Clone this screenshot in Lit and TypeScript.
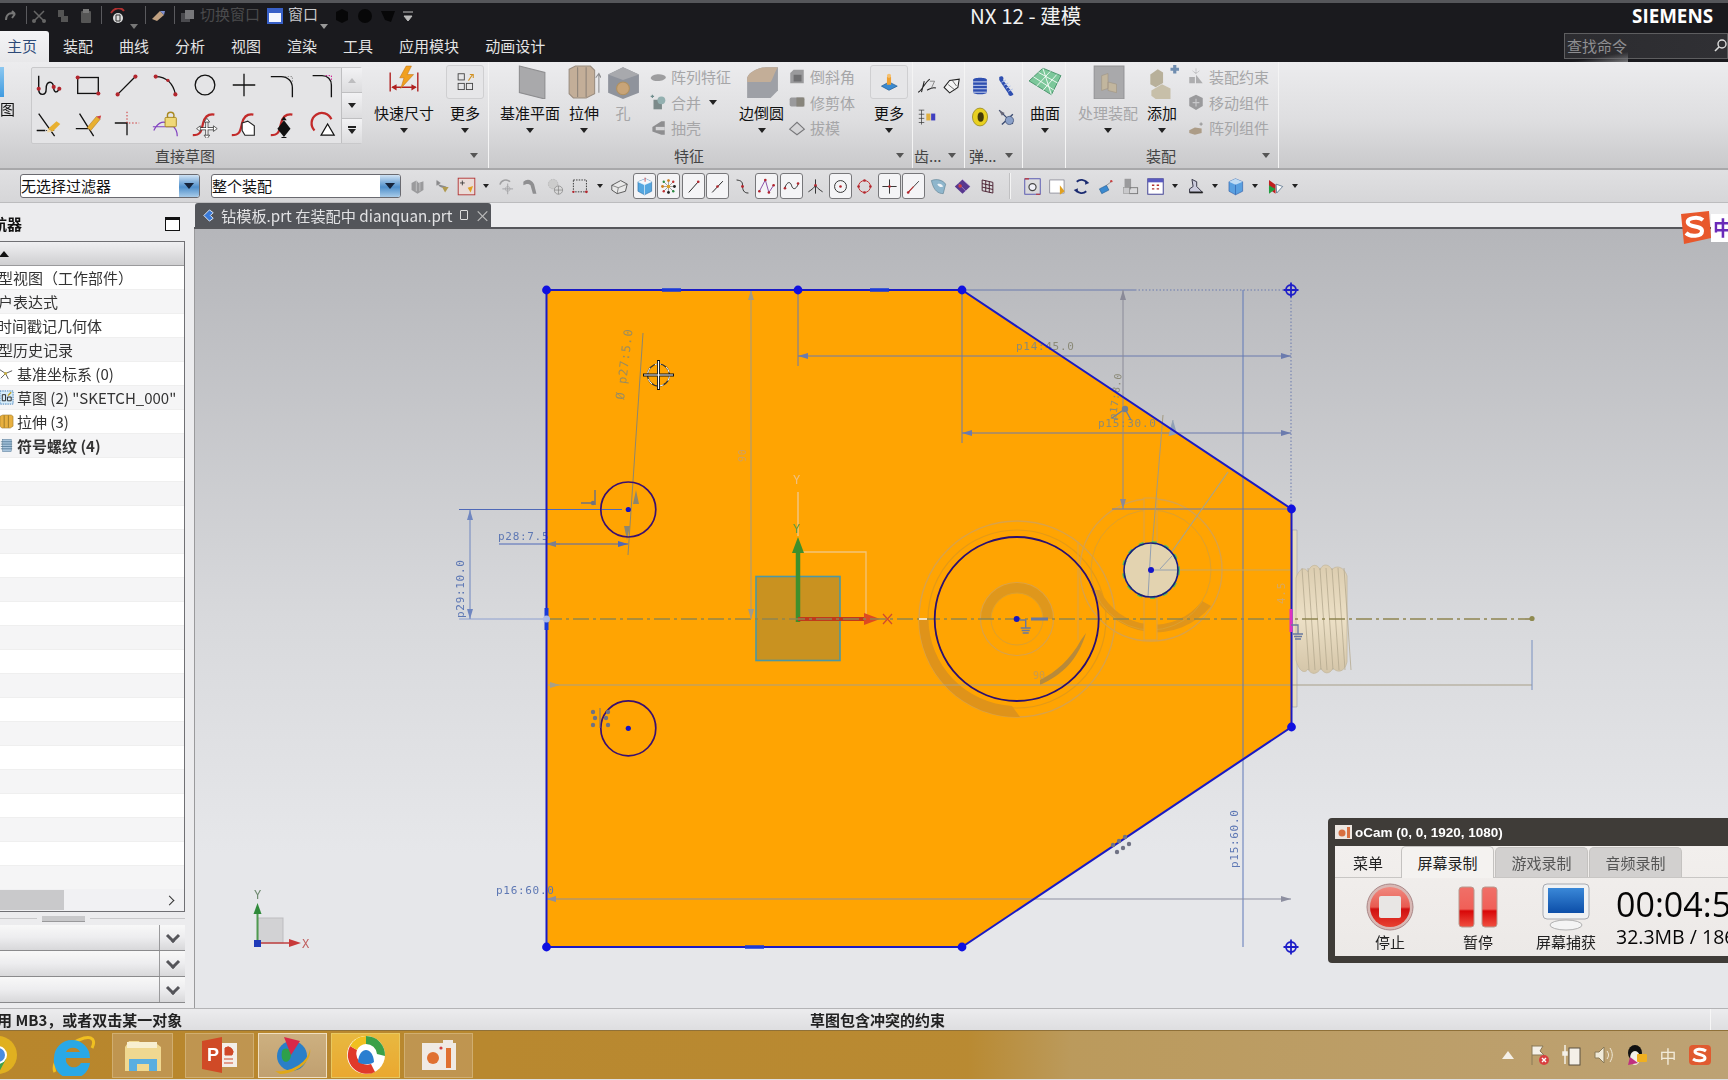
import { LitElement, html, svg, css, nothing } from 'lit';
import { customElement } from 'lit/decorators.js';

const RED = '#b3262e';
const dot = (x: number, y: number, r = 2.2, c = RED) => svg`<circle cx=${x} cy=${y} r=${r} fill=${c}></circle>`;
const sCurve = svg`<path d="M3 29 C12 29 12 24 14 16 C16 8 20 6 26 7" fill="none" stroke="#c22a2a" stroke-width="2.4"></path>`;

// all icons drawn on a 32 box
const ICONS: Record<string, unknown> = {
  // sketch gallery
  studio: svg`<path d="M5 6 V20 C5 28 13 28 13 20 C13 11 21 11 21 19 C21 25 26 25 27 18" fill="none" stroke="#111" stroke-width="1.5"></path>${dot(5, 20)}${dot(21, 18)}${dot(27, 20)}`,
  rect: svg`<rect x="5" y="8" width="22" height="17" fill="none" stroke="#111" stroke-width="1.4"></rect>${dot(5, 8)}${dot(27, 25)}`,
  line: svg`<path d="M6 26 L25 7" stroke="#111" stroke-width="1.4"></path>${dot(6, 26)}${dot(25, 7)}`,
  arc: svg`<path d="M5 7 C17 7 24 15 26 26" fill="none" stroke="#111" stroke-width="1.4"></path>${dot(5, 7)}${dot(26, 26)}${dot(18, 11, 1.8)}`,
  circle: svg`<circle cx="16" cy="16" r="10.5" fill="none" stroke="#111" stroke-width="1.4"></circle>`,
  plus: svg`<path d="M16 4 V28 M4 16 H28" stroke="#111" stroke-width="1.4"></path>`,
  fillet: svg`<path d="M3 7 H14 C21 7 26 12 26 19 V29" fill="none" stroke="#111" stroke-width="1.4"></path><path d="M18 7 H26 V14" fill="none" stroke="#888" stroke-dasharray="1.5 1.5"></path>`,
  chamfer: svg`<path d="M6 6 H16 C22 6 26 10 26 16 V29" fill="none" stroke="#111" stroke-width="1.4"></path><path d="M20 6 H26 V12" fill="none" stroke="#c08" stroke-dasharray="1.5 1.5"></path>`,
  trim: svg`<path d="M5 6 L22 30 M3 24 H12" stroke="#111" stroke-width="1.4"></path><path d="M3 24 H22" stroke="#111" stroke-dasharray="1 1.5"></path><path d="M15 22 L24 14 L28 17 L20 25 Z" fill="#e8b030"></path><path d="M15 22 L20 25 L14 26Z" fill="#f4d8a0"></path>`,
  extend: svg`<path d="M7 6 L22 30 M3 22 H16" stroke="#111" stroke-width="1.4"></path><path d="M15 21 L25 9 L29 12 L19 24 Z" fill="#e8b030" stroke="#a06818" stroke-width=".5"></path><path d="M25 9 L29 12 L30 8Z" fill="#d04040"></path>`,
  corner: svg`<path d="M3 16 H16 V29" fill="none" stroke="#111" stroke-width="1.4"></path><path d="M16 4 V16 H29" fill="none" stroke="#c22" stroke-width="1" stroke-dasharray="1.5 2"></path>`,
  lockcurve: svg`<path d="M3 24 C8 14 14 13 22 18 C26 21 28 25 28 30 M2 20 H24" fill="none" stroke="#8040c0" stroke-width="1.3"></path><circle cx="21" cy="8" r="3.5" fill="none" stroke="#a88820" stroke-width="1.5"></circle><rect x="15" y="10" width="12" height="10" rx="1" fill="#f0d878" stroke="#a88820"></rect>`,
  smove: svg`${sCurve}<path d="M18 14 V30 M10 22 H26" stroke="#333" stroke-width="3.2"></path><path d="M18 14 V30 M10 22 H26" stroke="#fff" stroke-width="1.6"></path><path d="M18 11 L15 15 H21Z M18 33 L15 29 H21Z M7 22 L11 19 V25Z M29 22 L25 19 V25Z" fill="#fff" stroke="#333" stroke-width=".8"></path>`,
  shand: svg`${sCurve}<path d="M14 16 L20 14 L27 19 V29 H17 L14 24Z" fill="#fff" stroke="#222" stroke-width="1.2"></path>`,
  sdia: svg`${sCurve}<path d="M17 13 L24 22 L17 31 L10 22Z" fill="#111"></path><path d="M17 9 L14 13 H20Z M17 35 L14 31 H20Z" fill="#111"></path>`,
  arctri: svg`<path d="M8 24 A11 11 0 1 1 26 12" fill="none" stroke="#c22a2a" stroke-width="2.4"></path><path d="M22 17 L29 29 H15Z" fill="#fff" stroke="#111" stroke-width="1.3"></path>`,
  // ribbon big
  quickdim: svg`<path d="M3 7 V25 M29 7 V25 M5 21 H27" stroke="#b02020" stroke-width="1.3" fill="none"></path><path d="M4 21 L9 18 V24Z M28 21 L23 18 V24Z" fill="#b02020"></path><path d="M18 1 L23 1 L19 9 L25 9 L13 22 L16 12 L12 12Z" fill="#f0a020" stroke="#c07010" stroke-width=".5"></path>`,
  moreS: svg`<rect x="6" y="4" width="9" height="9" fill="none" stroke="#444" stroke-width="1.3"></rect><rect x="6" y="18" width="9" height="9" fill="none" stroke="#444" stroke-width="1.3"></rect><rect x="18" y="18" width="9" height="9" fill="none" stroke="#444" stroke-width="1.3"></rect><path d="M21 14 L27 5 M23 5 H28 V10" stroke="#d09020" fill="none" stroke-width="1.5"></path>`,
  plane: svg`<path d="M6 1 L30 7 V32 L6 26Z" fill="#a9a9ab" stroke="#8d8d8f"></path>`,
  extrude: svg`<path d="M2 4 L8 1 L22 1 L26 5 V27 L18 31 H6 L2 27Z" fill="#c3ae98" stroke="#9a8d80"></path><path d="M10 2 V30 M18 2 V30" stroke="#8d8378"></path><path d="M30 26 V9 M27 12 L30 8 L32 12" stroke="#8d8d8f" fill="none"></path>`,
  hole: svg`<path d="M2 9 L16 2 L31 9 V26 L16 32 L2 26Z" fill="#8f939c"></path><path d="M2 9 L16 2 L31 9 L16 14Z" fill="#a8a9ad"></path><circle cx="16" cy="22" r="6" fill="#c8a478" stroke="#b09060"></circle>`,
  blend: svg`<path d="M2 12 C4 6 14 2 20 2 H31 V24 L24 31 H2Z" fill="#9ea0a6"></path><path d="M2 12 C4 6 14 2 20 2 H31 C28 6 26 14 24 16 H2Z" fill="#c3ae98"></path>`,
  moreF: svg`<path d="M5 22 L16 16 L28 22 L16 28Z" fill="#3b8ad0" stroke="#205a90"></path><path d="M13 8 H19 V20 H13Z" fill="#f0a030"></path><circle cx="16" cy="7" r="3" fill="#f4c070"></circle>`,
  surface: svg`<path d="M1 15 L14 3 L31 10 L22 28 Z" fill="#7cc79a" stroke="#3d8d62" stroke-width=".8"></path><path d="M5 11 L25 24 M10 7 L28 17 M14 3 L22 28 M8 20 L21 6 M14 24 L27 9" stroke="#fff" stroke-width=".8"></path>`,
  process: svg`<rect x="3" y="1" width="28" height="31" fill="#a9a9ab" stroke="#949496"></rect><path d="M10 10 L16 8 V22 L10 24Z M16 16 L24 18 V26 L16 24Z" fill="#c2b69e" stroke="#a09684" stroke-width=".6"></path>`,
  add: svg`<path d="M5 9 L12 4 L17 7 V17 L10 21 L5 18Z" fill="#b8b09a"></path><path d="M6 24 L16 18 L24 22 V32 H10 L6 29Z" fill="#c7bfa9"></path><path d="M24 4 H32 M28 0 V8" stroke="#6f8db0" stroke-width="3"></path>`,
  // small grey ribbon items
  pattern: svg`<path d="M3 18 C4 10 26 8 30 16 C30 24 6 26 3 18Z" fill="#9d9d9f"></path>`,
  merge: svg`<path d="M3 6 H9 M6 3 V9" stroke="#6f8d8d" stroke-width="2"></path><rect x="8" y="12" width="15" height="17" fill="#7c8a8a"></rect><circle cx="22" cy="13" r="7" fill="#93b0b0"></circle>`,
  shell: svg`<path d="M6 14 L22 4 H28 V28 H22 L6 22Z" fill="#8e8e90"></path><path d="M12 14 H28 V20 H12Z" fill="#d5d5d7"></path>`,
  chamf: svg`<path d="M4 9 L10 3 H28 V27 H4Z" fill="#9a9a9c"></path><path d="M10 12 H24 V24 H10Z" fill="#6f6f71"></path>`,
  trimb: svg`<rect x="3" y="8" width="26" height="16" rx="3" fill="#9a9a9c"></rect><path d="M15 8 H29 V24 H15Z" fill="#88857c"></path>`,
  draft: svg`<path d="M3 18 L16 6 L29 18 L16 28Z" fill="#d4d4d6" stroke="#77777a" stroke-width="2"></path>`,
  constraint: svg`<path d="M4 27 H14 V16 H4Z M16 27 H28 L16 12Z" fill="#adadaf"></path><path d="M16 1 V10 M10 5 L16 10 L22 5" stroke="#8d8d8f" fill="none" stroke-dasharray="2 1"></path>`,
  moveC: svg`<path d="M16 3 L28 9 V23 L16 30 L4 23 V9Z" fill="#9a9a9c"></path><path d="M16 10 V24 M10 17 H22" stroke="#c8c8ca" stroke-width="2"></path>`,
  patternC: svg`<path d="M4 20 L14 15 L26 17 V25 L14 28 L4 25Z" fill="#ac9c87"></path><path d="M25 6 V12 M22 9 H28" stroke="#888" stroke-width="1.5"></path>`,
  // gear & spring
  gear1: svg`<path d="M3 25 C8 24 12 12 20 6 M12 9 L8 25 M16 22 C20 20 24 17 29 19" fill="none" stroke="#222" stroke-width="1.5"></path><path d="M20 9 L27 9 L22 20" fill="none" stroke="#777" stroke-width="1.2"></path>`,
  gear2: svg`<path d="M6 18 L14 8 L28 6 L26 18 L14 26Z" fill="#f4f4f4" stroke="#222" stroke-width="1.5"></path><path d="M12 14 L22 22 M18 8 L24 16" stroke="#333"></path>`,
  gear3: svg`<path d="M8 6 V27 M4 6 H12 M4 12 H12 M4 18 H12 M4 24 H12" stroke="#333" fill="none"></path><rect x="15" y="11" width="6" height="10" fill="#e0b040"></rect><rect x="22" y="11" width="6" height="10" fill="#4040c0"></rect>`,
  spr1: svg`<path d="M6 7 C6 3 26 3 26 7 V25 C26 29 6 29 6 25Z" fill="#2f4fb0"></path><path d="M6 10 H26 M6 15 H26 M6 20 H26 M6 25 H26" stroke="#d0d8f0" stroke-width="1.4"></path>`,
  spr2: svg`<path d="M7 4 C11 1 14 5 12 8 L26 27 C23 31 19 29 19 26 L7 8Z" fill="#2f4fb0"></path><path d="M10 11 L16 8 M13 15 L19 12 M16 19 L22 16 M19 23 L25 20" stroke="#b0c0e8" stroke-width="1.3"></path>`,
  spr3: svg`<ellipse cx="16" cy="16" rx="11" ry="13" fill="#e8d020" stroke="#8a7a10"></ellipse><ellipse cx="17" cy="16" rx="4.5" ry="7" fill="#443a08"></ellipse>`,
  spr4: svg`<path d="M6 6 L26 26 M26 12 L10 27" stroke="#3a4a70" stroke-width="2"></path><circle cx="21" cy="21" r="6" fill="#8aa0c8" stroke="#3a4a70"></circle><path d="M6 6 L14 10 L10 14Z" fill="#667"></path>`,
  // navigator rows
  csys: svg`<path d="M2 8 L14 16 L4 26 M14 16 L28 10 M14 16 L20 28" stroke="#555" stroke-width="2" fill="none"></path><circle cx="14" cy="16" r="3" fill="#c9b040"></circle>`,
  skt: svg`<rect x="2" y="2" width="28" height="28" fill="#d6ecfa" stroke="#3a7ab8" stroke-width="2" stroke-dasharray="3 2"></rect><path d="M7 23 H14 V10 H7Z M18 23 H26 V15 H18Z" fill="none" stroke="#222" stroke-width="2"></path><path d="M19 12 L26 5" stroke="#c0a020" stroke-width="3"></path>`,
  ext: svg`<path d="M2 5 L8 2 H26 L30 5 V26 L24 30 H6 L2 26Z" fill="#e8b040" stroke="#8a6a20"></path><path d="M11 3 V29 M20 3 V29" stroke="#8a6a20" stroke-width="1.6"></path>`,
  thr: svg`<rect x="8" y="3" width="18" height="26" fill="#a8c4dc" stroke="#48708f"></rect><path d="M4 8 H28 M4 13 H28 M4 18 H28 M4 23 H28" stroke="#48708f" stroke-width="1.6"></path>`,
  // toolbar
  gb1: svg`<path d="M6 10 L14 6 L18 10 L26 7 V22 L16 28 L6 22Z" fill="#9a9a9c"></path><path d="M14 6 V24 M20 10 V24" stroke="#d8d8da"></path>`,
  gb2: svg`<path d="M8 6 V14 L14 10Z M10 12 C14 18 18 18 24 16" fill="#8a8a8c" stroke="#8a8a8c"></path><path d="M17 17 H28 L22 26Z" fill="#b09a50"></path>`,
  redsel: svg`<rect x="2" y="2" width="28" height="28" fill="#eadcd8" stroke="#b03030" stroke-width="1.5"></rect><path d="M9 6 V14 M5 10 H13" stroke="#333" stroke-width="1.4"></path><path d="M18 18 L27 15 L23 26Z" fill="#e0a020"></path>`,
  gb3: svg`<path d="M5 13 A10 10 0 0 1 22 8" fill="none" stroke="#a0a0a2" stroke-width="2.5"></path><path d="M18 11 V29 M9 20 H27" stroke="#a0a0a2" stroke-width="1.5"></path><circle cx="18" cy="20" r="4" fill="none" stroke="#a0a0a2"></circle>`,
  gb4: svg`<path d="M4 8 C10 2 18 4 22 12 L26 28 L20 28 L16 14 C12 10 8 12 4 14Z" fill="#8f8f91"></path>`,
  gb5: svg`<circle cx="12" cy="12" r="8" fill="#ccc" stroke="#999" stroke-dasharray="1.5 1.5"></circle><circle cx="21" cy="22" r="7" fill="#d8d8d8" stroke="#777"></circle><path d="M21 15 V29 M14 22 H28" stroke="#777"></path>`,
  dashrect: svg`<rect x="4" y="5" width="22" height="20" fill="none" stroke="#333" stroke-width="1.6" stroke-dasharray="2.5 2"></rect><circle cx="26" cy="25" r="2.3" fill="${RED}"></circle><circle cx="4" cy="25" r="2" fill="${RED}"></circle>`,
  cubeout: svg`<path d="M3 14 L18 6 L29 12 L26 24 L12 28 L3 22Z" fill="#e8e8e8" stroke="#444" stroke-width="1.4"></path><path d="M3 14 L14 18 L29 12 M14 18 L12 28" stroke="#444" fill="none"></path>`,
  cubeblue: svg`<path d="M5 8 L18 3 L28 8 V24 L16 30 L5 24Z" fill="#55a7e0" stroke="#2a6ea8"></path><path d="M5 8 L16 13 L28 8 M16 13 V30" stroke="#fff" fill="none"></path><path d="M5 8 L18 3 L28 8 L16 13Z" fill="#f4f7fb"></path><path d="M17 1 V8" stroke="#d04040" stroke-width="1.4"></path>`,
  nodes: svg`<path d="M16 4 V28 M4 16 H28 M7 7 L25 25 M25 7 L7 25" stroke="#444" stroke-width=".8"></path><circle cx="16" cy="16" r="3" fill="#e0a020"></circle><circle cx="16" cy="6" r="2.4" fill="#d08020"></circle><circle cx="16" cy="26" r="2.4" fill="#222"></circle><circle cx="6" cy="16" r="2.4" fill="#d08020"></circle><circle cx="26" cy="16" r="2.4" fill="#222"></circle><circle cx="8" cy="8" r="2" fill="#2a8a40"></circle><circle cx="24" cy="24" r="2" fill="#2a8a40"></circle><circle cx="24" cy="8" r="2" fill="#c03030"></circle><circle cx="8" cy="24" r="2" fill="#c03030"></circle>`,
  lineEnd: svg`<path d="M8 26 L24 8" stroke="#111" stroke-width="1.5"></path>${dot(24, 8)}`,
  lineMid: svg`<path d="M7 26 L25 7" stroke="#111" stroke-width="1.5"></path>${dot(16, 16)}`,
  curveRed: svg`<path d="M6 5 C14 6 16 8 16 14 C16 22 18 27 26 27" fill="none" stroke="#222" stroke-width="1.5"></path>${dot(16, 16, 2.4)}`,
  zig: svg`<path d="M4 24 L14 5 L20 26 L28 14" fill="none" stroke="#8040a0" stroke-width="1.5"></path>${dot(4, 24)}${dot(14, 5)}${dot(20, 26)}${dot(28, 14)}`,
  wave: svg`<path d="M4 20 C9 6 14 8 16 14 C18 22 24 22 28 10" fill="none" stroke="#222" stroke-width="1.6"></path>${dot(5, 19)}${dot(27, 11)}`,
  fork: svg`<path d="M16 4 V28 M4 25 C10 21 14 18 16 14 C18 18 22 21 28 25" fill="none" stroke="#222" stroke-width="1.5"></path>${dot(16, 14)}`,
  circDot: svg`<circle cx="16" cy="16" r="10" fill="none" stroke="#222" stroke-width="1.5"></circle>${dot(16, 16)}`,
  circRed: svg`<circle cx="16" cy="16" r="10" fill="none" stroke="#c22a2a" stroke-width="1.6"></circle>${dot(16, 6)}${dot(16, 26)}${dot(6, 16)}${dot(26, 16)}`,
  plusS: svg`<path d="M16 4 V28 M4 16 H28" stroke="#222" stroke-width="1.5"></path>${dot(16, 16)}`,
  lineRed: svg`<path d="M7 26 L25 7" stroke="#222" stroke-width="1.4"></path><path d="M7 26 L16 16" stroke="#c22a2a" stroke-width="1.8"></path>${dot(7, 26)}`,
  surfBlue: svg`<path d="M4 6 C14 2 24 6 28 12 L24 28 C16 28 8 24 4 6Z" fill="#8fb6cc" stroke="#5a7d90"></path><path d="M14 12 C18 10 22 12 24 16 C20 18 16 16 14 12Z" fill="#f0f4f8"></path>`,
  diamond: svg`<path d="M3 16 L16 4 L29 16 L16 28Z" fill="#58388f"></path><path d="M9 11 L22 24 M16 4 L29 16" stroke="#c8a8e8"></path><circle cx="12" cy="15" r="3" fill="#d04040"></circle>`,
  grid: svg`<path d="M7 5 L25 9 V27 L7 23Z M13 6 V24 M19 8 V26 M7 11 L25 15 M7 17 L25 21" fill="none" stroke="#4a2030" stroke-width="1.6"></path>`,
  zoomF: svg`<rect x="3" y="3" width="26" height="26" fill="none" stroke="#44a" stroke-width="1.4"></rect><circle cx="16" cy="17" r="6" fill="#f0f0f8" stroke="#444" stroke-width="2"></circle><path d="M3 3 H10 M22 29 H29" stroke="#c03030" stroke-width="2"></path>`,
  zoomW: svg`<rect x="3" y="5" width="24" height="22" fill="#fff" stroke="#667"></rect><path d="M20 14 L28 24 L20 30Z" fill="#e0a020"></path>`,
  rotate: svg`<path d="M8 8 A11 11 0 0 1 25 10 M24 24 A11 11 0 0 1 7 22" fill="none" stroke="#1a2a70" stroke-width="3"></path><path d="M23 5 L29 10 L22 13Z M9 27 L3 22 L10 19Z" fill="#1a2a70"></path>`,
  pan: svg`<path d="M4 20 L16 14 L20 22 L8 28Z" fill="#3b8ad0" stroke="#205a90"></path><circle cx="24" cy="7" r="2" fill="#d04040"></circle><path d="M16 14 L24 8" stroke="#666"></path>`,
  clone: svg`<rect x="6" y="3" width="11" height="18" fill="#9a9a9c"></rect><rect x="14" y="18" width="14" height="10" fill="none" stroke="#777" stroke-width="1.5"></rect><rect x="4" y="18" width="10" height="10" fill="#cacacc" stroke="#999"></rect>`,
  cal: svg`<rect x="3" y="3" width="26" height="26" fill="#fff" stroke="#3a3a90" stroke-width="1.6"></rect><rect x="3" y="3" width="26" height="6" fill="#5a5ac0"></rect><path d="M10 14 H14 M18 14 H22 M10 20 H14 M18 20 H22" stroke="#b03030" stroke-width="2.5"></path>`,
  lamp: svg`<path d="M10 4 L18 8 V16 L28 26 H6 V20 L12 16Z" fill="#ccd" stroke="#334" stroke-width="1.6"></path><path d="M6 26 H28" stroke="#222" stroke-width="3"></path>`,
  cubeB2: svg`<path d="M5 8 L16 3 L28 8 V24 L16 30 L5 24Z" fill="#5aa0e0" stroke="#2a5aa8"></path><path d="M5 8 L16 13 L28 8 L16 3Z" fill="#c0dcf4"></path><path d="M16 13 V30" stroke="#2a5aa8"></path>`,
  flagRG: svg`<path d="M5 5 L16 13 V28 L5 20Z" fill="#c02020"></path><path d="M5 14 L16 20 L5 28Z" fill="#20a040"></path><path d="M17 12 L28 16 L18 27Z" fill="#fff" stroke="#246"></path>`,
};

const icon = (name: string, size = 24) =>
  html`<svg class="ic" width=${size} height=${size} viewBox="0 0 32 32">${ICONS[name]}</svg>`;

const caret = html`<span class="caret"></span>`;

const GALLERY = ['studio', 'rect', 'line', 'arc', 'circle', 'plus', 'fillet', 'chamfer', 'trim', 'extend', 'corner', 'lockcurve', 'smove', 'shand', 'sdia', 'arctri'];

interface TbItem { ic: string; box?: boolean; drop?: boolean; sep?: boolean }
const TOOLBAR: TbItem[] = [
  { ic: 'gb1' }, { ic: 'gb2' }, { ic: 'redsel', drop: true }, { ic: 'gb3' }, { ic: 'gb4' }, { ic: 'gb5' }, { ic: 'dashrect', drop: true },
  { ic: 'cubeout' }, { ic: 'cubeblue', box: true }, { ic: 'nodes', box: true }, { ic: 'lineEnd', box: true }, { ic: 'lineMid', box: true },
  { ic: 'curveRed' }, { ic: 'zig', box: true }, { ic: 'wave', box: true }, { ic: 'fork' }, { ic: 'circDot', box: true }, { ic: 'circRed' },
  { ic: 'plusS', box: true }, { ic: 'lineRed', box: true }, { ic: 'surfBlue' }, { ic: 'diamond' }, { ic: 'grid' }, { ic: '', sep: true },
  { ic: 'zoomF' }, { ic: 'zoomW' }, { ic: 'rotate' }, { ic: 'pan' }, { ic: 'clone' }, { ic: 'cal', drop: true }, { ic: 'lamp', drop: true }, { ic: 'cubeB2', drop: true }, { ic: 'flagRG', drop: true },
];

const NAV_ROWS: { text: string; shift?: number; ic?: string; bold?: boolean }[] = [
  { text: '模型视图（工作部件）', shift: -17 },
  { text: '用户表达式', shift: -17 },
  { text: '部件时间戳记几何体', shift: -33 },
  { text: '模型历史记录', shift: -17 },
  { text: '基准坐标系 (0)', ic: 'csys' },
  { text: '草图 (2) "SKETCH_000"', ic: 'skt' },
  { text: '拉伸 (3)', ic: 'ext' },
  { text: '符号螺纹 (4)', ic: 'thr', bold: true },
];

const arrowDefs = svg`
  <defs>
    <linearGradient id="thr" x1="0" x2="0" y1="0" y2="1">
      <stop offset="0" stop-color="#dccdb0"></stop><stop offset=".5" stop-color="#ece0c6"></stop><stop offset="1" stop-color="#d4c5a8"></stop>
    </linearGradient>
    <marker id="ar" viewBox="0 0 10 6" refX="10" refY="3" markerWidth="10" markerHeight="6" orient="auto-start-reverse" markerUnits="userSpaceOnUse"><path d="M0 0 L10 3 L0 6Z" fill="context-stroke"></path></marker>
  </defs>`;

const constraintMark = (x: number, y: number) => svg`
  <circle cx=${x} cy=${y} r="3" fill="#1818c0"></circle>
  <path d="M${x + 3} ${y + 1} H${x + 9} V${y + 9} M${x + 4} ${y + 9} H${x + 14} M${x + 5} ${y + 11.5} H${x + 13} M${x + 6} ${y + 14} H${x + 12}" stroke="#6878a0" stroke-width="1.4" fill="none"></path>`;

const threadLines = [1302, 1314, 1326, 1338];

// the sketch itself: a free canvas in page coordinates
const sketch = svg`
  ${arrowDefs}
  <!-- threaded stud behind the plate -->
  <path d="M1292 530 H1297 V707 H1292Z" fill="#e6dcc0" stroke="#9c9aa8" stroke-width=".6"></path>
  <path d="M1296 578 C1300 566 1306 568 1308 572 C1311 563 1318 564 1320 570 C1323 562 1330 565 1332 570 C1335 565 1344 566 1347 576 V662 C1344 674 1336 672 1333 668 C1330 675 1323 674 1321 668 C1317 675 1311 675 1308 669 C1305 674 1299 672 1296 660Z" fill="url(#thr)" stroke="#c4b79c" stroke-width=".8"></path>
  ${threadLines.map((x) => svg`<path d="M${x} 568 L${x + 7} 670 M${x + 6} 568 L${x + 13} 670" stroke="#b5a98f" stroke-width=".8"></path>`)}

  <!-- plate -->
  <polygon points="546.5,290 962,290 1291.5,509 1291.5,727 962,947 546.5,947" fill="#ffa402"></polygon>

  <!-- counterbore rings seen through the plate -->
  <circle cx="1017" cy="619" r="98" fill="none" stroke="#d9a24a" stroke-width="1.4"></circle>
  <circle cx="1017" cy="619" r="89" fill="none" stroke="#e39a18" stroke-width="1.2"></circle>
  <path d="M919 619 A98 98 0 0 0 1020 717 L1012 706 A89 89 0 0 1 928 619Z" fill="#df931a"></path>
  <circle cx="1017" cy="619" r="36.5" fill="none" stroke="#d9a24a" stroke-width="1.2"></circle>
  <path d="M981 619 A36 36 0 0 1 1053 619 H1043 A26 26 0 0 0 991 619Z" fill="#df971c"></path>
  <circle cx="1017" cy="619" r="26" fill="none" stroke="#dca030" stroke-width="1"></circle>
  <circle cx="1151" cy="570" r="71" fill="none" stroke="#d9a24a" stroke-width="1.3"></circle>
  <path d="M1091 590 A71 71 0 0 0 1211 606 L1202 601 A60 60 0 0 1 1100 590Z" fill="#e0951a"></path>
  <circle cx="1151" cy="570" r="60" fill="none" stroke="#dca030" stroke-width="1"></circle>
  <rect x="1144" y="498" width="13" height="142" fill="#ffa402" stroke="#d9a24a"></rect>
  <path d="M1078 543 V640" stroke="#d9a24a"></path>
  <path d="M1040 685 C1062 675 1078 660 1086 633 L1081 640 C1070 660 1056 672 1040 680Z" fill="#b88a3a"></path>
  <text x="1033" y="679" class="dim" fill="#c89a50" font-size="10">90</text>

  <!-- datum CSYS -->
  <rect x="756" y="576.5" width="84" height="84" fill="#c99220" stroke="#4c98a4" stroke-width="1.6"></rect>
  <path d="M802 552 H866 V619" fill="none" stroke="#f4c478" stroke-width="1.3"></path>
  <path d="M798 492 V536" stroke="#f2c888" stroke-width="1.4"></path>
  <text x="793" y="484" class="dim" fill="#f0c080" font-size="12">Y</text>
  <text x="793" y="533" class="dim" fill="#5f9a40" font-size="12">Y</text>
  <path d="M798 622 V546" stroke="#3f8f2c" stroke-width="4.5"></path>
  <path d="M798 537 L792 553 H804Z" fill="#3f8f2c"></path>
  <path d="M798 619 H868" stroke="#c0391c" stroke-width="4"></path>
  <path d="M880 619 L864 613 V625Z" fill="#dd4a22"></path>
  <path d="M883 614 L892 624 M892 614 L883 624" stroke="#d04a30" stroke-width="1.2"></path>

  <!-- centre line -->
  <path d="M546 619 H1532" stroke="#8f8550" stroke-width="1.6" stroke-dasharray="16 4 3 4"></path>
  <circle cx="1532" cy="618.5" r="2.6" fill="#8f8a50"></circle>
  <path d="M548 685 H1532" stroke="#a8a088" stroke-width="1.1"></path>
  <path d="M1532 640 V690" stroke="#7890c0" stroke-width="1"></path>
  <path d="M560 685 L550 682 V688Z" fill="#a8a088"></path>

  <!-- dimensions -->
  <g fill="none" stroke="#6b7bae" stroke-width="1">
    <path d="M751 290 V619" stroke="#a09a88" marker-start="url(#ar)" marker-end="url(#ar)"></path>
    <path d="M798 290 V366"></path>
    <path d="M798 356 H1291" marker-start="url(#ar)" marker-end="url(#ar)"></path>
    <path d="M962 290 V443"></path>
    <path d="M962 433 H1291" marker-start="url(#ar)" marker-end="url(#ar)"></path>
    <path d="M962 290 H1135"></path>
    <path d="M1135 290 H1291" stroke-dasharray="1.5 2"></path>
    <path d="M1291 290 V509" stroke-dasharray="1.5 2"></path>
    <path d="M1243 290 V947" stroke="#5f78b8"></path>
    <path d="M1123 290 V509" stroke="#8a8a98" marker-start="url(#ar)" marker-end="url(#ar)"></path>
    <path d="M1112 509 H1291"></path>
    <path d="M1163 415 L1148 597" stroke="#a39a80"></path>
    <path d="M1159 570 L1228 472" stroke="#a8a48c" stroke-width="1.2"></path>
    <path d="M1151 570 H1292" stroke="#c8a860"></path>
    <path d="M1160 570 L1172 582" stroke="#a39a80"></path>
    <path d="M546 899 H1291" marker-start="url(#ar)" marker-end="url(#ar)" stroke="#8d8fa0"></path>
    <path d="M643 333 L628 555" stroke="#8c8670"></path>
    <path d="M459 509.5 H622" stroke="#4f69b8"></path>
    <path d="M459 619 H546" stroke="#8ea0d0"></path>
    <path d="M470 510 V619" marker-start="url(#ar)" marker-end="url(#ar)" stroke="#6f86c0"></path>
    <path d="M499 544 H628" marker-end="url(#ar)" stroke="#4f69b8"></path>
    <path d="M546 544 H560" stroke="#7a7f90" marker-start="url(#ar)"></path>
  </g>
  <path d="M636 490 L633 504 L639 504Z M627 540 L624 526 L630 526Z" fill="#8c8670"></path>
  <path d="M1173 420 L1169 436 L1177 434Z M1150 595 L1146 580 L1154 581Z M1160 569 L1175 555 L1168 551Z" fill="#8fa0b8"></path>

  <g class="dim spaced">
    <text transform="translate(624 400) rotate(-83)" fill="#9a8c60" font-size="12">Ø p27:5.0</text>
    <text transform="translate(746 462) rotate(-90)" fill="#d0a060" font-size="10">90</text>
    <text x="498" y="540" fill="#5e78b4" font-size="11">p28:7.5</text>
    <text transform="translate(464 618) rotate(-90)" fill="#5e78b4" font-size="11">p29:10.0</text>
    <text x="1016" y="350" fill="#8b8a78" font-size="11">p14:45.0</text>
    <text x="1098" y="427" fill="#8b8a78" font-size="11">p15:30.0</text>
    <text transform="translate(1116 420) rotate(-83)" fill="#8b8a78" font-size="10">p17:8.0</text>
    <text transform="translate(1238 868) rotate(-90)" fill="#5e78b4" font-size="11">p15:60.0</text>
    <text x="496" y="894" fill="#5e78b4" font-size="11">p16:60.0</text>
    <text transform="translate(1285 604) rotate(-90)" fill="#d8a860" font-size="11">4.5</text>
  </g>

  <!-- hole (open, shows the stud colour) -->
  <circle cx="1151" cy="570" r="27.5" fill="#e3d3b0"></circle>
  <path d="M1173 420 L1169 436 M1151 544 L1148 597 M1160 569 L1172 556 M1151 570 H1178" stroke="#93a0b0" stroke-width="1"></path>
  <circle cx="1151" cy="570" r="27.5" fill="none" stroke="#58c060" stroke-width="3" stroke-dasharray="5 8"></circle>
  <circle cx="1151" cy="570" r="27" fill="none" stroke="#1a1a80" stroke-width="1.6"></circle>
  <circle cx="1151" cy="570" r="3" fill="#1414c8"></circle>

  <!-- circles -->
  <circle cx="1016.7" cy="619" r="82" fill="none" stroke="#2a0f70" stroke-width="1.8"></circle>
  <circle cx="628.3" cy="509.5" r="27.5" fill="none" stroke="#3a0f70" stroke-width="1.7"></circle>
  <circle cx="628.3" cy="728.3" r="27.5" fill="none" stroke="#3a0f70" stroke-width="1.7"></circle>
  <circle cx="628.3" cy="509.5" r="2.6" fill="#1414c8"></circle>
  <circle cx="628.3" cy="728.3" r="2.6" fill="#1414c8"></circle>

  <!-- plate outline and nodes -->
  <polygon points="546.5,290 962,290 1291.5,509 1291.5,727 962,947 546.5,947" fill="none" stroke="#1a1ac4" stroke-width="2"></polygon>
  <path d="M1291 609 V632" stroke="#e030c0" stroke-width="3"></path>
  ${[[546.5, 290], [798, 290], [962, 290], [1291.5, 509], [1291.5, 727], [962, 947], [546.5, 947]].map(([x, y]) => svg`<circle cx=${x} cy=${y} r="4.4" fill="#1010e0"></circle>`)}
  <path d="M662 290 H681 M870 290 H889 M745 947 H764" stroke="#1a3ad8" stroke-width="3.5"></path>
  <path d="M546.5 608 V630" stroke="#1a3ad8" stroke-width="4"></path>
  <circle cx="546.5" cy="619" r="3.5" fill="#a8b8e8"></circle>
  ${[[1291, 290], [1291, 947]].map(([x, y]) => svg`<g stroke="#1e1ec8" fill="none" stroke-width="1.8"><circle cx=${x} cy=${y} r="5"></circle><path d="M${x - 7.5} ${y} H${x + 7.5} M${x} ${y - 7.5} V${y + 7.5}"></path></g>`)}

  <!-- constraint marks -->
  ${constraintMark(1016.7, 619)}
  <path d="M1031 619 H1048" stroke="#6878a0" stroke-width="3"></path>
  <path d="M1291 625 H1298 V634 M1293 634 H1303 M1294 636.5 H1302 M1295 639 H1301" stroke="#6878a0" stroke-width="1.3" fill="none"></path>
  <path d="M595 490 V505 M581 503 H595" stroke="#71737f" stroke-width="1.5"></path><circle cx="593" cy="503" r="2.2" fill="#71737f"></circle>
  <g fill="#6f7284">
    <circle cx="593" cy="712" r="2.2"></circle><circle cx="595" cy="718" r="2.2"></circle><circle cx="593" cy="725" r="2.2"></circle>
    <circle cx="608" cy="712" r="2.2"></circle><circle cx="606" cy="718" r="2.2"></circle><circle cx="608" cy="725" r="2.2"></circle>
    <circle cx="1113" cy="845" r="2.2"></circle><circle cx="1119" cy="841" r="2.2"></circle><circle cx="1125" cy="837" r="2.2"></circle>
    <circle cx="1117" cy="852" r="2.2"></circle><circle cx="1123" cy="848" r="2.2"></circle><circle cx="1129" cy="844" r="2.2"></circle>
  </g>
  <path d="M600 708 V728" stroke="#71737f"></path>
  <circle cx="1125" cy="409" r="3.2" fill="#6f7f98"></circle>
  <path d="M1112 418 L1125 409 L1131 420" stroke="#6f7f98" fill="none" stroke-width="1.4"></path>
  <path d="M919 619 h8" stroke="#f4e0b8" stroke-width="2"></path>

  <!-- mouse cursor -->
  <g fill="none">
    <circle cx="658.5" cy="375" r="11" stroke="#333" stroke-width="1.2"></circle>
    <circle cx="658.5" cy="375" r="11" stroke="#fff" stroke-width="1" stroke-dasharray="6 6"></circle>
    <path d="M658.5 360 V390 M643 375 H674" stroke="#111" stroke-width="3"></path>
    <path d="M658.5 361 V389 M644 375 H673" stroke="#fff" stroke-width="1.2"></path>
  </g>

  <!-- WCS in the corner -->
  <rect x="258" y="918" width="25" height="25" fill="#d2d2d4" stroke="#bdbdc0"></rect>
  <path d="M257.5 943 V912" stroke="#4f9a50" stroke-width="2"></path>
  <path d="M257.5 903 L253.5 914 H261.5Z" fill="#2f8a3a"></path>
  <path d="M257 943 H292" stroke="#c04040" stroke-width="1.6"></path>
  <path d="M301 943 L289 939 V947Z" fill="#c83a3a"></path>
  <rect x="254" y="940" width="7" height="7" fill="#1f3ab8"></rect>
  <g class="dim" font-size="12"><text x="254" y="899" fill="#6f8a70">Y</text><text x="302" y="948" fill="#c06060">X</text></g>
`;

@customElement('app-root')
export class AppRoot extends LitElement {
  static styles = css`
    :host {
      display: block;
      position: relative;
      width: 1728px;
      height: 1080px;
      overflow: hidden;
      font-family: 'Noto Sans CJK SC', 'Noto Sans', sans-serif;
      font-size: 15px;
      color: #111;
      background: #e0e0e2;
    }
    .screen { display: flex; flex-direction: column; height: 1080px; filter: blur(0.35px); }
    .ic { display: block; flex: none; }
    .caret { display: inline-block; width: 0; height: 0; border: 4px solid transparent; border-top: 5px solid #222; border-bottom: 0; }

    /* title bar */
    .title { height: 62px; flex: none; background: #1a1a1e; border-top: 3px solid #55565a; box-sizing: border-box; color: #fff; }
    .title-top { display: grid; grid-template-columns: 970px auto 1fr; height: 28px; align-items: start; }
    .qat { height: 24px; position: relative; }
    .qat span.q { position: absolute; top: 4px; height: 16px; }
    .qat .s { position: absolute; top: 3px; width: 1px; height: 18px; background: #5a5a5e; }
    .q-text { position: absolute; top: 0; color: #4a4a4c; line-height: 22px; white-space: nowrap; }
    .q-text.on { color: #c8c8cc; }
    .appname { font-size: 20.5px; line-height: 24px; color: #f2f2f2; white-space: nowrap; }
    .siemens { justify-self: end; padding-right: 15px; font: 700 18.8px/26px 'Open Sans', sans-serif; letter-spacing: 0; }
    .tabs { display: flex; height: 31px; align-items: stretch; position: relative; }
    .tab { display: flex; align-items: center; padding: 0 13px 2px; color: #e4e4e4; }
    .tab.home { padding: 0 12px 2px 7px; margin-right: 1px; background: linear-gradient(#f4f4f6, #e8e8ea); color: #2c4a78; border-radius: 0 3px 0 0; }
    .search { margin-left: auto; width: 164px; height: 26px; margin-top: 2px; box-sizing: border-box; border: 1px solid #5e5e60; background: linear-gradient(90deg, #2c2c30, #303034); color: #8f8f92; display: flex; align-items: center; padding-left: 2px; line-height: 22px; }
    .glow { position: absolute; right: 100px; bottom: 0; width: 90px; height: 10px; background: linear-gradient(170deg, transparent 60%, #77777a); }

    /* ribbon */
    .ribbon { height: 106px; flex: none; display: flex; background: linear-gradient(#ececee 0%, #dedee0 55%, #c9c9cb 100%); border-bottom: 2px solid #a8a8aa; box-sizing: content-box; }
    .group { flex: none; display: flex; flex-direction: column; border-right: 1px solid #f4f4f4; box-sizing: border-box; }
    .row { height: 83px; display: flex; position: relative; }
    .foot { height: 23px; padding-bottom: 2px; box-sizing: border-box; display: flex; align-items: center; position: relative; color: #444; line-height: 20px; white-space: nowrap; }
    .foot .launch { position: absolute; top: 8px; border: 4px solid transparent; border-top: 5px solid #555; border-bottom: 0; }
    .big { flex: none; display: flex; flex-direction: column; align-items: center; white-space: nowrap; }
    .big .pic { height: 37px; margin-top: 1px; display: flex; align-items: center; justify-content: center; }
    .big .pic.boxed { width: 38px; height: 34px; margin-top: 3px; margin-bottom: 1px; border: 1px solid #cfcfd1; border-radius: 3px; background: #e6e6e8; box-sizing: border-box; }
    .big .lbl { line-height: 22px; margin-top: 2px; }
    .big .caret { margin-top: 4px; }
    .off { color: #a6a6a8; }
    .small { flex: none; display: flex; flex-direction: column; white-space: nowrap; padding-top: 2px; }
    .small .it { height: 25.5px; display: flex; align-items: center; gap: 4px; color: #a6a6a8; }
    .small .caret { margin-left: 4px; }

    .gallery { width: 331px; height: 77px; margin: 5px 0 0 31px; display: flex; box-sizing: border-box; border: 1px solid #c9c9cb; background: #e4e4e6; border-radius: 2px; flex: none; }
    .g-grid { flex: 1; display: grid; grid-template-columns: repeat(8, 39px); grid-auto-rows: 38px; margin: -2px 0 0 -3px; justify-content: start; align-content: start; align-items: center; justify-items: center; }
    .g-scroll { width: 20px; flex: none; display: flex; flex-direction: column; border-left: 1px solid #bfbfc1; }
    .g-scroll div { flex: 1; display: flex; align-items: center; justify-content: center; border-bottom: 1px solid #bfbfc1; background: linear-gradient(#f2f2f4, #dcdcde); }
    .g-scroll div:last-child { border-bottom: 0; }
    .tri-up { border: 4px solid transparent; border-bottom: 5px solid #bdbdbf; border-top: 0; }
    .tri-dn { border: 4px solid transparent; border-top: 5px solid #222; border-bottom: 0; }
    .tri-dn.bar { position: relative; margin-top: 2px; }
    .tri-dn.bar::before { content: ''; position: absolute; left: -4px; top: -8px; width: 8px; height: 1.5px; background: #222; }
    .cut { position: absolute; left: 0; top: 5px; width: 4px; height: 30px; background: linear-gradient(#8cc8f0, #3f9be0); }
    .cuttext { position: absolute; left: -15px; top: 36px; line-height: 22px; }

    /* selection toolbar */
    .tools { height: 33px; flex: none; display: flex; align-items: center; padding-left: 20px; background: linear-gradient(#e0e0e2, #d6d6d8); border-bottom: 1px solid #bcbcbe; box-sizing: border-box; }
    .combo { flex: none; height: 24px; box-sizing: border-box; background: #fff; border: 1px solid #6a6a70; border-radius: 3px; display: flex; align-items: center; justify-content: space-between; line-height: 22px; }
    .combo i { width: 20px; height: 22px; display: flex; align-items: center; justify-content: center; background: linear-gradient(#cfe2f4, #4f8fcb 55%, #a8cbe8); border-radius: 0 2px 2px 0; }
    .combo i::after { content: ''; border: 5px solid transparent; border-top: 6px solid #15233a; border-bottom: 0; }
    .combo.one { width: 180px; margin-right: 11px; }
    .combo.two { width: 190px; margin-right: 4px; }
    .tb { flex: none; width: 24.5px; height: 26px; display: flex; align-items: center; justify-content: center; box-sizing: border-box; }
    .tb.box { background: #f4f4f6; border: 1px solid #77777a; border-radius: 3px; width: 23px; margin: 0 .75px; }
    .tb.drop { width: 40px; justify-content: flex-start; gap: 7px; padding-left: 3px; }
    .tb.sep { width: 21px; }
    .tb.sep::after { content: ''; width: 1px; height: 26px; background: #f4f4f4; box-shadow: -1px 0 0 #c0c0c2; }
    .tb .caret { border-width: 3px; border-top-width: 4px; }

    /* body */
    .body { flex: none; height: 805px; display: flex; }
    .nav { width: 194px; flex: none; background: #ececee; display: flex; flex-direction: column; overflow: hidden; }
    .nav-head { height: 38px; flex: none; display: flex; align-items: center; font-weight: 700; padding-top: 3px; box-sizing: border-box; }
    .nav-head span { margin-left: -53px; white-space: nowrap; }
    .win { margin-left: auto; margin-right: 14px; width: 15px; height: 14px; border: 1px solid #111; border-top: 3px solid #111; box-sizing: border-box; background: #fff; }
    .list { height: 671px; flex: none; margin-right: 9px; margin-left: -1px; border: 1px solid #707074; display: flex; flex-direction: column; box-sizing: border-box; background: #fff; }
    .list-head { height: 24px; flex: none; background: linear-gradient(#f0f0f2, #cfcfd1); border-bottom: 1px solid #9a9a9c; box-sizing: border-box; display: flex; align-items: center; }
    .list-head::before { content: ''; margin-left: -1px; border: 5px solid transparent; border-bottom: 6px solid #111; border-top: 0; }
    .rows { flex: 1; overflow: hidden; }
    .nrow { height: 24px; box-sizing: border-box; border-bottom: 1px solid #efefef; display: flex; align-items: center; white-space: nowrap; line-height: 22px; color: #333; }
    .nrow:nth-child(even) { background: #f5f5f6; }
    .nrow .t { font-size: 15px; }
    .nrow.b { font-weight: 700; }
    .nrow .ic { margin: 0 3px 0 -1px; }
    .hscroll { height: 22px; flex: none; background: #f1f1f3; display: flex; align-items: center; justify-content: space-between; }
    .thumb { width: 64px; height: 20px; background: #c9c9cb; }
    .chev { width: 6px; height: 6px; border: solid #333; border-width: 1.5px 1.5px 0 0; transform: rotate(45deg); margin-right: 11px; }
    .split { height: 13px; flex: none; display: flex; align-items: center; gap: 5px; margin-right: 9px; }
    .split::before { content: ''; flex: 0 0 37px; height: 1px; background: #c8c8ca; }
    .split b { flex: 0 0 43px; height: 5px; background: #c8c8ca; border-bottom: 1px solid #99999b; }
    .split::after { content: ''; flex: 1; height: 1px; background: #c8c8ca; }
    .acc { height: 26px; flex: none; margin-right: 9px; box-sizing: border-box; background: linear-gradient(#f8f8f8, #ededef 50%, #d8d8da); border-bottom: 1px solid #8a8a8c; display: flex; justify-content: flex-end; }
    .acc div { width: 26px; border-left: 1px solid #9a9a9c; box-sizing: border-box; display: flex; align-items: center; justify-content: center; }
    .acc div::after { content: ''; width: 7px; height: 7px; margin-top: -4px; border: solid #55555a; border-width: 0 3px 3px 0; transform: rotate(45deg); }

    .main { flex: 1; display: flex; flex-direction: column; min-width: 0; }
    .docbar { height: 24px; flex: none; background: #ececee; border-bottom: 2px solid #55565a; box-sizing: content-box; display: flex; }
    .doctab { margin-left: 1px; width: 296px; height: 24px; background: #53555a; display: flex; align-items: center; gap: 5px; padding-left: 6px; box-sizing: border-box; color: #e2e2e4; white-space: nowrap; border-radius: 3px 3px 0 0; font-size: 15.2px; }
    .doctab em { font-style: normal; color: #ddd; width: 8px; height: 10px; border: 1.5px solid #ddd; box-sizing: border-box; border-radius: 1px; margin-left: 2px; }
    .doctab u { text-decoration: none; color: #bbb; font-size: 16px; margin-left: 2px; }
    .view { flex: 1; position: relative; background: linear-gradient(#b5b6ba 0%, #d8d9dc 50%, #e6e7ea 80%); border-left: 1px solid #9a9a9c; box-sizing: border-box; overflow: hidden; }
    .view svg { position: absolute; inset: 0; width: 100%; height: 100%; }
    .dim { font-family: 'DejaVu Sans Mono', monospace; }
    .spaced { letter-spacing: 0.7px; }

    /* status + taskbar */
    .status { height: 22px; flex: none; display: flex; background: linear-gradient(#ececee, #dedee0); border-top: 1px solid #b4b4b6; box-sizing: border-box; font-weight: 700; color: #222; line-height: 21px; white-space: nowrap; overflow: hidden; }
    .status .a { width: 828px; flex: none; margin-left: -18px; }
    .status .b { width: 900px; flex: none; border-right: 1px solid #f6f6f6; }
    .taskbar { height: 49px; flex: none; display: flex; align-items: center; background: linear-gradient(90deg, #b8862c 0%, #b98a32 56%, #bb9a5c 62%, #bda274 100%); border-top: 1px solid #8f7038; box-sizing: border-box; }
    .tk { flex: none; height: 45px; margin-right: 4px; display: flex; align-items: center; justify-content: center; box-sizing: border-box; }
    .tk.btn { border: 1px solid #d0ae70; background: #bf9550; }
    .tk.act { border-color: #f0dfc0; background: linear-gradient(#cdb080, #c0a070); }
    .tk.hot { border-color: #e8c860; background: linear-gradient(#e8b840, #eaa830); }
    .tk.plain { background: transparent; }
    .tray { margin-left: auto; display: flex; padding-right: 12px; }
    .tray div { width: 32px; height: 30px; display: flex; align-items: center; justify-content: center; color: #f2ead8; font-size: 17px; }

    /* floating windows */
    .ocam { position: absolute; left: 1328px; top: 818px; width: 420px; height: 145px; background: #3f3c38; border-radius: 4px; box-sizing: border-box; padding: 0 0 7px 7px; display: flex; flex-direction: column; filter: blur(0.3px); }
    .ocam-title { height: 28px; flex: none; display: flex; align-items: center; gap: 3px; color: #fff; font: 700 13.5px 'Liberation Sans', sans-serif; white-space: nowrap; }
    .ocam-title svg { flex: none; }
    .ocam-body { flex: 1; background: linear-gradient(#f2efed, #ece9e7); display: flex; flex-direction: column; }
    .ocam-tabs { height: 32px; flex: none; display: flex; align-items: flex-end; border-bottom: 1px solid #c8c6c4; box-sizing: border-box; color: #222; }
    .ot { height: 30px; width: 93px; margin-right: 1px; display: flex; align-items: center; justify-content: center; border: 1px solid #c4c2c0; border-bottom: 0; border-radius: 5px 5px 0 0; background: #d2d0cf; box-sizing: border-box; color: #555; }
    .ot.plain { width: 66px; background: transparent; border-color: transparent; margin-right: 0; color: #222; }
    .ot.on { height: 32px; background: #f4f2f0; position: relative; top: 1px; color: #222; }
    .ocam-row { flex: 1; display: flex; }
    .oc { flex: none; width: 88px; display: flex; flex-direction: column; align-items: center; font-size: 15px; color: #222; line-height: 20px; }
    .oc .pic { height: 50px; display: flex; align-items: center; justify-content: center; margin-top: 4px; }
    .timer { font-family: 'Open Sans', 'Liberation Sans', sans-serif; color: #050505; padding-left: 6px; white-space: nowrap; }
    .timer b { display: block; font-weight: 400; font-size: 34px; line-height: 40px; margin-top: 6px; }
    .timer span { display: block; font-size: 19.5px; line-height: 26px; }
    .sogou { position: absolute; left: 1676px; top: 210px; width: 60px; height: 36px; display: flex; align-items: center; filter: blur(0.3px); }
    .sogou svg { flex: none; }
    .sogou span { background: #fff; color: #6a2ab8; font-weight: 700; font-size: 20px; height: 28px; line-height: 28px; padding-left: 2px; width: 30px; margin-left: -1px; }
  `;

  private big(label: string, ic: string, w: number, ml = 0, off = false, boxed = false) {
    return html`<div class="big ${off ? 'off' : ''}" style="width:${w}px;margin-left:${ml}px">
      <div class="pic ${boxed ? 'boxed' : ''}">${icon(ic, boxed ? 22 : 34)}</div>
      <div class="lbl">${label}</div>
      ${off && label === '孔' ? nothing : caret}
    </div>`;
  }

  private small(items: [string, string, boolean?][], w: number, ml: number) {
    return html`<div class="small" style="width:${w}px;margin-left:${ml}px">
      ${items.map(([ic, t, d]) => html`<div class="it">${icon(ic, 18)}<span>${t}</span>${d ? caret : nothing}</div>`)}
    </div>`;
  }

  private foot(label: string, labelX: number, launchX: number) {
    return html`<div class="foot">
      <span style="margin-left:${labelX}px">${label}</span>
      <i class="launch" style="left:${launchX}px"></i>
    </div>`;
  }

  private qat() {
    const q = (x: number, s: unknown) => html`<span class="q" style="left:${x - 8}px"><svg width="16" height="16" viewBox="0 0 16 16">${s}</svg></span>`;
    const sep = (x: number) => html`<i class="s" style="left:${x}px"></i>`;
    return html`<div class="qat">
      ${q(11, svg`<path d="M3 12 C3 6 7 4 12 6 M12 6 L9 3 M12 6 L9 10" stroke="#777" stroke-width="2" fill="none"></path>`)}
      ${sep(26)}
      ${q(39, svg`<path d="M3 3 L12 12 M13 3 L4 12" stroke="#666" stroke-width="1.5"></path><circle cx="3" cy="13" r="2" fill="#666"></circle><circle cx="13" cy="13" r="2" fill="#666"></circle>`)}
      ${q(63, svg`<path d="M3 2 H9 V8 H13 V14 H6 V9 H3Z" fill="#555"></path>`)}
      ${q(86, svg`<rect x="3" y="3" width="10" height="12" rx="1" fill="#555"></rect><rect x="5" y="1" width="6" height="4" fill="#777"></rect>`)}
      ${sep(101)}
      ${q(118, svg`<circle cx="8" cy="10" r="5" fill="#ddd"></circle><path d="M1 5 C5 -1 11 -1 14 3" stroke="#b03030" fill="none" stroke-width="2"></path><path d="M6 7 H10 V13 H6Z" fill="none" stroke="#333"></path>`)}
      <span class="q" style="left:130px;top:9px"><span class="caret" style="border-top-color:#777"></span></span>
      ${sep(145)}
      ${q(158, svg`<path d="M2 11 L10 3 L14 7 L7 13Z" fill="#c0a080"></path><path d="M10 3 L14 7 L15 3Z" fill="#8090d0"></path>`)}
      ${sep(174)}
      ${q(187, svg`<rect x="2" y="5" width="9" height="9" fill="#4a4a4e"></rect><rect x="6" y="2" width="9" height="9" fill="#77777a"></rect>`)}
      <span class="q-text" style="left:200px">切换窗口</span>
      ${q(275, svg`<rect x="1" y="1" width="14" height="14" fill="#f4f7ff" stroke="#3860c8" stroke-width="2"></rect><path d="M1 1 H15 V5 H1Z" fill="#3860c8"></path>`)}
      <span class="q-text on" style="left:288px">窗口</span>
      <span class="q" style="left:320px;top:9px"><span class="caret" style="border-top-color:#999"></span></span>
      ${q(342, svg`<path d="M8 1 L14 4 V12 L8 15 L2 12 V4Z" fill="#070708"></path>`)}
      ${q(365, svg`<circle cx="8" cy="8" r="7" fill="#070708"></circle>`)}
      ${q(388, svg`<path d="M1 3 H15 L11 14 L5 12Z" fill="#070708"></path>`)}
      ${q(408, svg`<path d="M3 4 H13 M4 8 H12 L8 13Z" stroke="#bbb" fill="#bbb"></path>`)}
    </div>`;
  }

  render() {
    const rows = Array.from({ length: 26 }, (_, i) => NAV_ROWS[i]);
    return html`
      <div class="screen">
        <div class="title">
          <div class="title-top">
            ${this.qat()}
            <div class="appname">NX 12 - 建模</div>
            <div class="siemens">SIEMENS</div>
          </div>
          <div class="tabs">
            <div class="tab home">主页</div>
            ${['装配', '曲线', '分析', '视图', '渲染', '工具', '应用模块', '动画设计'].map((t) => html`<div class="tab">${t}</div>`)}
            <div class="glow"></div>
            <div class="search">查找命令
              <svg style="margin-left:auto;flex:none" width="14" height="14" viewBox="0 0 14 14"><circle cx="9" cy="5" r="4" fill="none" stroke="#ddd" stroke-width="1.4"></circle><path d="M6 8 L2 12" stroke="#ddd" stroke-width="1.6"></path></svg>
            </div>
          </div>
        </div>

        <div class="ribbon">
          <div class="group" style="width:489px">
            <div class="row">
              <div class="cut"></div><div class="cuttext">草图</div>
              <div class="gallery">
                <div class="g-grid">${GALLERY.map((n) => icon(n, 30))}</div>
                <div class="g-scroll"><div><span class="tri-up"></span></div><div><span class="tri-dn"></span></div><div><span class="tri-dn bar"></span></div></div>
              </div>
              ${this.big('快速尺寸', 'quickdim', 60, 12)}
              ${this.big('更多', 'moreS', 38, 12, false, true)}
            </div>
            ${this.foot('直接草图', 155, 470)}
          </div>
          <div class="group" style="width:424px">
            <div class="row">
              ${this.big('基准平面', 'plane', 60, 11)}
              ${this.big('拉伸', 'extrude', 30, 9)}
              ${this.big('孔', 'hole', 30, 9, true)}
              ${this.small([['pattern', '阵列特征'], ['merge', '合并', true], ['shell', '抽壳']], 80, 11)}
              ${this.big('边倒圆', 'blend', 45, 10)}
              ${this.small([['chamf', '倒斜角'], ['trimb', '修剪体'], ['draft', '拔模']], 62, 4)}
              ${this.big('更多', 'moreF', 38, 20, false, true)}
            </div>
            ${this.foot('特征', 185, 407)}
          </div>
          <div class="group" style="width:52px">
            <div class="row">
              <div class="mini" style="display:grid;grid-template-columns:24px 24px;grid-auto-rows:31px;margin:8px 0 0 2px;align-content:start;justify-items:center;align-items:center">
                ${icon('gear1', 22)}${icon('gear2', 22)}${icon('gear3', 22)}
              </div>
            </div>
            ${this.foot('齿...', 1, 35)}
          </div>
          <div class="group" style="width:58px">
            <div class="row">
              <div class="mini" style="display:grid;grid-template-columns:24px 27px;grid-auto-rows:31px;margin:8px 0 0 3px;align-content:start;justify-items:center;align-items:center">
                ${icon('spr1', 22)}${icon('spr2', 24)}${icon('spr3', 22)}${icon('spr4', 22)}
              </div>
            </div>
            ${this.foot('弹...', 4, 40)}
          </div>
          <div class="group" style="width:43px">
            <div class="row">${this.big('曲面', 'surface', 30, 7)}</div>
          </div>
          <div class="group" style="width:213px">
            <div class="row">
              ${this.big('处理装配', 'process', 60, 12, true)}
              ${this.big('添加', 'add', 30, 9)}
              ${this.small([['constraint', '装配约束'], ['moveC', '移动组件'], ['patternC', '阵列组件']], 90, 10)}
            </div>
            ${this.foot('装配', 80, 196)}
          </div>
        </div>

        <div class="tools">
          <div class="combo one">无选择过滤器<i></i></div>
          <div class="combo two">整个装配<i></i></div>
          ${TOOLBAR.map((t) => t.sep
            ? html`<div class="tb sep"></div>`
            : html`<div class="tb ${t.box ? 'box' : ''} ${t.drop ? 'drop' : ''}">${icon(t.ic, 19)}${t.drop ? caret : nothing}</div>`)}
        </div>

        <div class="body">
          <div class="nav">
            <div class="nav-head"><span>部件导航器</span><i class="win"></i></div>
            <div class="list">
              <div class="list-head"></div>
              <div class="rows">
                ${rows.map((r) => html`<div class="nrow ${r?.bold ? 'b' : ''}">
                  ${r?.ic ? icon(r.ic, 15) : nothing}
                  ${r ? html`<span class="t" style="margin-left:${r.shift ?? 0}px">${r.text}</span>` : nothing}
                </div>`)}
              </div>
              <div class="hscroll"><div class="thumb"></div><div class="chev"></div></div>
            </div>
            <div class="split"><b></b></div>
            <div class="acc"><div></div></div>
            <div class="acc"><div></div></div>
            <div class="acc"><div></div></div>
          </div>
          <div class="main">
            <div class="docbar">
              <div class="doctab">
                <svg width="15" height="15" viewBox="0 0 16 16"><path d="M9 2 L3 8 L9 14 L13 11 L10 8 L13 5Z" fill="#3a7ad8" stroke="#e4eefc"></path></svg>
                <span>钻模板.prt 在装配中 dianquan.prt</span><em></em><u>×</u>
              </div>
            </div>
            <div class="view">
              <svg viewBox="195 229 1533 779" preserveAspectRatio="none">${sketch}</svg>
            </div>
          </div>
        </div>

        <div class="status">
          <div class="a">使用 MB3，或者双击某一对象</div>
          <div class="b">草图包含冲突的约束</div>
        </div>

        <div class="taskbar">
          <div class="tk plain" style="width:18px;margin-right:30px;overflow:hidden;justify-content:flex-end">
            <svg style="flex:none" width="40" height="40" viewBox="0 0 40 40"><circle cx="20" cy="20" r="19" fill="#e0b020"></circle><path d="M20 1 A19 19 0 0 0 4 10 L14 26 Z" fill="#d8402c"></path><path d="M4 10 A19 19 0 0 0 20 39 L28 24Z" fill="#3fa04a"></path><circle cx="20" cy="20" r="9" fill="#fff"></circle><circle cx="20" cy="20" r="7" fill="#4a8ce0"></circle></svg>
          </div>
          <div class="tk plain" style="width:50px;margin-right:14px">
            <svg width="46" height="42" viewBox="0 0 46 42"><path d="M5 38 C1 30 14 10 34 4 C42 2 46 6 42 14" fill="none" stroke="#f0c020" stroke-width="3"></path><path d="M4 24 A18 18 0 1 1 40 24 H16 A8 8 0 0 0 31 29 H40 A18 18 0 0 1 4 24Z M16 18 H30 A8 8 0 0 0 16 18Z" fill="#29a8e6" fill-rule="evenodd"></path></svg>
          </div>
          <div class="tk btn" style="width:61px;margin-right:12px">
            <svg width="40" height="36" viewBox="0 0 40 36"><path d="M2 10 L6 4 H16 L18 7 H34 L38 10 V34 H2Z" fill="#f0d890"></path><rect x="4" y="5" width="30" height="6" fill="#f8efd0"></rect><path d="M6 22 H34 V34 H26 V27 H14 V34 H6Z" fill="#5aaee0"></path></svg>
          </div>
          <div class="tk btn" style="width:69px">
            <svg width="38" height="38" viewBox="0 0 38 38"><rect x="18" y="7" width="18" height="24" fill="#f4eee8"></rect><path d="M24 12 A5 5 0 0 1 31 19 H24Z M23 23 H32 M23 27 H32" fill="#d04828" stroke="#d04828"></path><path d="M1 5 L21 1 V37 L1 33Z" fill="#d04a26"></path><text x="6" y="25" fill="#fff" font-size="18" font-weight="700" font-family="Liberation Sans">P</text></svg>
          </div>
          <div class="tk btn act" style="width:69px">
            <svg width="42" height="40" viewBox="0 0 42 40"><circle cx="20" cy="21" r="15" fill="#2a7fc8"></circle><path d="M10 16 C14 10 22 16 18 24 C14 30 8 26 10 16Z" fill="#2ea04a"></path><path d="M12 2 L28 6 L19 20Z" fill="#d82848"></path><path d="M3 36 C18 38 36 28 38 14 C40 22 30 38 8 39Z" fill="#e0a818"></path></svg>
          </div>
          <div class="tk btn hot" style="width:69px">
            <svg width="42" height="42" viewBox="0 0 42 42"><circle cx="21" cy="21" r="19" fill="#fff"></circle><path d="M21 2 A19 19 0 0 1 40 22 L32 20 A11 11 0 0 0 21 10Z" fill="#3aa048"></path><path d="M5 12 A19 19 0 0 0 30 38 L26 30 A11 11 0 0 1 12 16Z" fill="#e03a2a"></path><path d="M5 12 A19 19 0 0 1 21 2 V10 A11 11 0 0 0 12 16Z" fill="#f0c020"></path><path d="M13 28 C14 12 28 12 29 28 C26 31 16 31 13 28Z" fill="#2a7ed0"></path></svg>
          </div>
          <div class="tk btn" style="width:69px">
            <svg width="36" height="30" viewBox="0 0 36 30"><rect x="1" y="3" width="34" height="27" fill="#f0eae4"></rect><rect x="22" y="0" width="10" height="4" fill="#f0eae4"></rect><circle cx="12" cy="18" r="6" fill="#e07030"></circle><rect x="25" y="8" width="5" height="20" fill="#e07030"></rect><circle cx="20" cy="8" r="1.6" fill="#d04040"></circle></svg>
          </div>
          <div class="tray">
            <div><svg width="12" height="8" viewBox="0 0 12 8"><path d="M6 0 L12 8 H0Z" fill="#f4f0e8"></path></svg></div>
            <div><svg width="22" height="22" viewBox="0 0 22 22"><path d="M3 1 V21 M3 2 H14 L11 7 L15 11 H3" fill="#f4f0e8" stroke="#8a7a58"></path><circle cx="15" cy="16" r="5" fill="#d84040"></circle><path d="M13 14 L17 18 M17 14 L13 18" stroke="#fff" stroke-width="1.4"></path></svg></div>
            <div><svg width="20" height="22" viewBox="0 0 20 22"><rect x="7" y="4" width="11" height="17" fill="#f4f0e8" stroke="#5a5040"></rect><path d="M3 1 V8 M1 8 H5 V11 H1Z M3 11 V20" stroke="#f4f0e8" stroke-width="1.5" fill="#f4f0e8"></path></svg></div>
            <div><svg width="20" height="22" viewBox="0 0 20 22"><path d="M1 8 H5 L10 3 V19 L5 14 H1Z" fill="#f0ead8" stroke="#8a7a58"></path><path d="M13 7 C15 10 15 12 13 15 M16 4 C19 9 19 13 16 18" stroke="#f0ead8" fill="none"></path></svg></div>
            <div><svg width="22" height="24" viewBox="0 0 22 24"><ellipse cx="10" cy="10" rx="7" ry="8" fill="#111"></ellipse><ellipse cx="10" cy="15" rx="5" ry="7" fill="#f4f0e8"></ellipse><path d="M5 14 L13 20 L3 22Z" fill="#c03080"></path><rect x="12" y="11" width="10" height="8" rx="1" fill="#f0b020"></rect></svg></div>
            <div>中</div>
            <div><svg width="24" height="22" viewBox="0 0 24 22"><rect x="1" y="1" width="22" height="20" rx="4" fill="#e05a30"></rect><path d="M18 7 C14 4 6 5 7 8 C8 11 17 10 17 14 C17 17 9 18 5 15" fill="none" stroke="#fff" stroke-width="3"></path></svg></div>
          </div>
        </div>
      </div>

      <div class="sogou">
        <svg width="36" height="36" viewBox="0 0 36 36"><path d="M5 4 L33 1 L35 28 L8 34 Z" fill="#e8582c"></path><path d="M27 10 C22 6 10 8 12 13 C14 18 26 15 26 21 C26 27 14 27 10 23" fill="none" stroke="#fff" stroke-width="4"></path></svg>
        <span>中</span>
      </div>

      <div class="ocam">
        <div class="ocam-title">
          <svg width="17" height="14" viewBox="0 0 17 14"><rect width="17" height="14" fill="#ece6e0"></rect><circle cx="7" cy="8" r="3.5" fill="#d87040"></circle><rect x="12" y="2" width="3" height="11" fill="#d87040"></rect></svg>
          oCam (0, 0, 1920, 1080)
        </div>
        <div class="ocam-body">
          <div class="ocam-tabs">
            <div class="ot plain">菜单</div>
            <div class="ot on">屏幕录制</div>
            <div class="ot">游戏录制</div>
            <div class="ot">音频录制</div>
          </div>
          <div class="ocam-row">
            <div class="oc" style="margin-left:11px">
              <div class="pic"><svg width="48" height="48" viewBox="0 0 48 48"><defs><linearGradient id="rr" x1="0" x2="0" y1="0" y2="1"><stop offset="0" stop-color="#f08a80"></stop><stop offset=".5" stop-color="#e85a50"></stop><stop offset=".55" stop-color="#d01010"></stop><stop offset="1" stop-color="#e84030"></stop></linearGradient></defs><circle cx="24" cy="24" r="23" fill="#d8b8b4" stroke="#a88"></circle><circle cx="24" cy="24" r="20" fill="url(#rr)"></circle><rect x="13" y="13" width="22" height="22" rx="2" fill="#e8e6e4"></rect></svg></div>
              <span>停止</span>
            </div>
            <div class="oc">
              <div class="pic"><svg width="40" height="42" viewBox="0 0 40 42"><defs><linearGradient id="pp" x1="0" x2="0" y1="0" y2="1"><stop offset="0" stop-color="#f07068"></stop><stop offset=".55" stop-color="#f06058"></stop><stop offset=".6" stop-color="#d80808"></stop><stop offset="1" stop-color="#f05040"></stop></linearGradient></defs><rect x="1" y="1" width="15" height="40" rx="3" fill="url(#pp)" stroke="#b89a90"></rect><rect x="24" y="1" width="15" height="40" rx="3" fill="url(#pp)" stroke="#b89a90"></rect></svg></div>
              <span>暂停</span>
            </div>
            <div class="oc">
              <div class="pic"><svg width="48" height="48" viewBox="0 0 48 48"><defs><linearGradient id="mm" x1="0" x2="0" y1="0" y2="1"><stop offset="0" stop-color="#3a88d8"></stop><stop offset="1" stop-color="#0c4ea8"></stop></linearGradient></defs><rect x="1" y="1" width="46" height="35" rx="4" fill="#f0f2f4" stroke="#a8aab0"></rect><rect x="6" y="5" width="36" height="25" fill="url(#mm)"></rect><ellipse cx="24" cy="42" rx="16" ry="5" fill="#f4f4f4" stroke="#b0b0b0"></ellipse></svg></div>
              <span style="white-space:nowrap">屏幕捕获</span>
            </div>
            <div class="timer">
              <b>00:04:55</b>
              <span>32.3MB / 186.1GB</span>
            </div>
          </div>
        </div>
      </div>
    `;
  }
}
